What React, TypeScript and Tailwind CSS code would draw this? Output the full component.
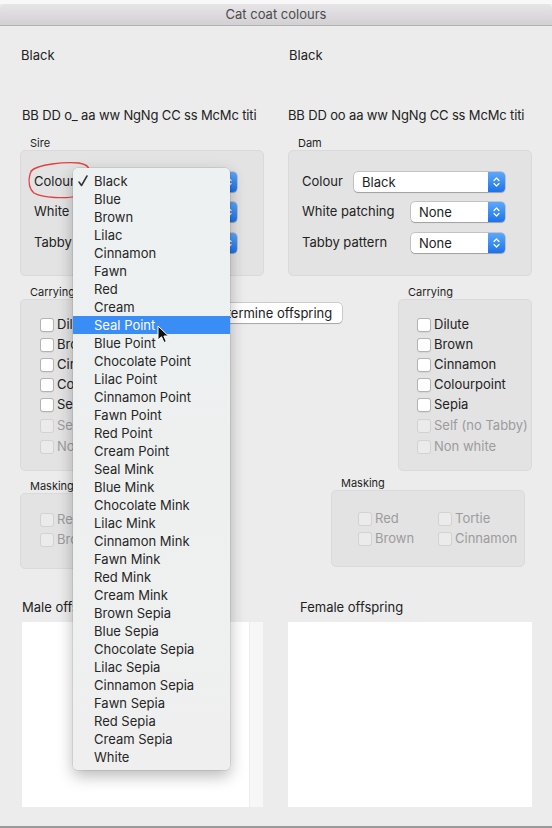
import React from 'react';

const COLOURS = [
  'Black', 'Blue', 'Brown', 'Lilac', 'Cinnamon', 'Fawn', 'Red', 'Cream',
  'Seal Point', 'Blue Point', 'Chocolate Point', 'Lilac Point', 'Cinnamon Point', 'Fawn Point', 'Red Point', 'Cream Point',
  'Seal Mink', 'Blue Mink', 'Chocolate Mink', 'Lilac Mink', 'Cinnamon Mink', 'Fawn Mink', 'Red Mink', 'Cream Mink',
  'Brown Sepia', 'Blue Sepia', 'Chocolate Sepia', 'Lilac Sepia', 'Cinnamon Sepia', 'Fawn Sepia', 'Red Sepia', 'Cream Sepia',
  'White',
];

const Stepper = () => (
  <div className="w-[17px] h-full rounded-r-[4px] bg-linear-to-b from-[#5ba8fb] to-[#1b72ea] flex items-center justify-center">
    <svg width="7" height="12" viewBox="0 0 7 12" fill="none" stroke="white" strokeWidth="1.2" strokeLinecap="round" strokeLinejoin="round">
      <path d="M1 4.5 L3.5 2 L6 4.5" />
      <path d="M1 7.5 L3.5 10 L6 7.5" />
    </svg>
  </div>
);

const Popup = ({ value, className }: { value: string; className: string }) => (
  <div className={`h-[20px] flex bg-white rounded-[4px] shadow-[0_0_0_0.5px_rgba(0,0,0,0.28),0_1px_1px_rgba(0,0,0,0.18)] ${className}`}>
    <span className="flex-1 pl-[8px] text-[13px] leading-[20px] text-[#222]">{value}</span>
    <Stepper />
  </div>
);

const Check = ({ label, disabled }: { label: string; disabled?: boolean }) => (
  <div className="h-[20px] flex items-center gap-[3px] whitespace-nowrap">
    <span className={`shrink-0 w-[14px] h-[14px] rounded-[3px] ${disabled ? 'bg-[#ebebeb] shadow-[inset_0_0_0_1px_#d2d2d2]' : 'bg-white shadow-[inset_0_0_0_1px_#b3b3b3,0_0.5px_0.5px_rgba(0,0,0,0.1)]'}`} />
    <span className={`text-[13px] ${disabled ? 'text-[#9c9c9c]' : 'text-[#222]'}`}>{label}</span>
  </div>
);

const GroupLabel = ({ children }: { children: React.ReactNode }) => (
  <div className="h-[14px] pl-[10px] text-[11px] leading-[14px] text-[#1f1f1f]">{children}</div>
);

const PickerBox = ({ label, colourClass, patchClass }: { label: string; colourClass: string; patchClass: string }) => (
  <div>
    <div className="h-[14px] mt-[13px] pl-[10px] text-[11px] leading-[14px] text-[#1f1f1f]">{label}</div>
    <div className="h-[126px] rounded-[5px] bg-[#e3e3e3] border border-[#dadada] pt-[21px] pl-[13px] pr-[26px]">
      <div className="h-[20px] flex items-center">
        <span className="text-[13px]">Colour</span>
        <Popup value="Black" className={`ml-auto ${colourClass}`} />
      </div>
      <div className="h-[20px] mt-[10px] flex items-center">
        <span className="text-[13px]">White patching</span>
        <Popup value="None" className={`ml-auto ${patchClass}`} />
      </div>
      <div className="h-[20px] mt-[11px] flex items-center">
        <span className="text-[13px]">Tabby pattern</span>
        <Popup value="None" className={`ml-auto ${patchClass}`} />
      </div>
    </div>
  </div>
);

const CarryingChecks = () => (
  <>
    <Check label="Dilute" />
    <Check label="Brown" />
    <Check label="Cinnamon" />
    <Check label="Colourpoint" />
    <Check label="Sepia" />
    <div className="mt-[1px]"><Check label="Self (no Tabby)" disabled /></div>
    <div className="mt-[1px]"><Check label="Non white" disabled /></div>
  </>
);

const MaskingChecks = () => (
  <>
    <Check label="Red" disabled />
    <Check label="Tortie" disabled />
    <Check label="Brown" disabled />
    <Check label="Cinnamon" disabled />
  </>
);

export default function App() {
  return (
    <div className="relative w-[552px] h-[828px] overflow-hidden bg-[#ececec] flex flex-col text-[#222] font-['Inter','Liberation_Sans',sans-serif]">
      <div className="h-[4px] bg-[#f8f8f8]" />
      <div className="h-[22px] rounded-t-[5px] bg-linear-to-b from-[#e7e5e7] to-[#d2d0d2] border-b border-[#b1b1b1] flex items-center justify-center text-[13px] text-[#4b4b4b]">
        Cat coat colours
      </div>

      <div className="flex-1 px-[20px]">
        {/* sire / dam summary */}
        <div className="grid grid-cols-[244px_244px] gap-x-[24px]">
          <div className="mt-[21px] pl-[1px] text-[13px] leading-[16px]">Black</div>
          <div className="mt-[21px] pl-[1px] text-[13px] leading-[16px]">Black</div>
          <div className="mt-[44px] pl-[2px] text-[13px] leading-[16px] tracking-[-0.15px] whitespace-nowrap">BB DD o_ aa ww NgNg CC ss McMc titi</div>
          <div className="mt-[44px] text-[13px] leading-[16px] tracking-[-0.15px] whitespace-nowrap">BB DD oo aa ww NgNg CC ss McMc titi</div>
          <PickerBox label="Sire" colourClass="w-[150px]" patchClass="w-[94px]" />
          <PickerBox label="Dam" colourClass="w-[151px]" patchClass="w-[94px]" />
        </div>

        {/* carrying */}
        <div className="mt-[9px] flex items-start">
          <div className="w-[133px]">
            <GroupLabel>Carrying</GroupLabel>
            <div className="h-[172px] rounded-[5px] bg-[#e3e3e3] border border-[#dadada] pt-[15px] pl-[19px] overflow-hidden">
              <CarryingChecks />
            </div>
          </div>
          <button className="ml-[47px] mt-[18px] w-[142px] h-[20px] rounded-[4px] bg-white text-[13px] leading-[20px] text-center shadow-[0_0_0_0.5px_rgba(0,0,0,0.28),0_1px_1px_rgba(0,0,0,0.18)]">
            Determine offspring
          </button>
          <div className="ml-[56px] w-[134px]">
            <GroupLabel>Carrying</GroupLabel>
            <div className="h-[172px] rounded-[5px] bg-[#e3e3e3] border border-[#dadada] pt-[15px] pl-[18px]">
              <CarryingChecks />
            </div>
          </div>
        </div>

        {/* masking */}
        <div className="flex items-start">
          <div className="mt-[8px] w-[193px]">
            <GroupLabel>Masking</GroupLabel>
            <div className="h-[76px] rounded-[5px] bg-[#e3e3e3] border border-[#dadada] pt-[16px] pl-[19px] grid grid-cols-[80px_80px] content-start">
              <MaskingChecks />
            </div>
          </div>
          <div className="mt-[5px] ml-[118px] w-[194px]">
            <GroupLabel>Masking</GroupLabel>
            <div className="h-[77px] rounded-[5px] bg-[#e3e3e3] border border-[#dadada] pt-[18px] pl-[26px] grid grid-cols-[80px_80px] content-start">
              <MaskingChecks />
            </div>
          </div>
        </div>

        {/* offspring */}
        <div className="mt-[30px] grid grid-cols-[244px_244px] gap-x-[24px]">
          <div className="pl-[2px]">
            <div className="h-[16px] text-[13px] leading-[16px]">Male offspring</div>
            <div className="mt-[7px] w-[241px] h-[185px] bg-white flex">
              <div className="flex-1" />
              <div className="w-[14px] bg-[#f7f7f7] border-l border-[#ededed]" />
            </div>
          </div>
          <div>
            <div className="h-[16px] pl-[12px] text-[13px] leading-[16px]">Female offspring</div>
            <div className="mt-[7px] h-[185px] bg-white" />
          </div>
        </div>
      </div>
      <div className="h-[2px] bg-[#9a9a9a]" />

      {/* hand-drawn annotation */}
      <svg className="absolute left-[26px] top-[160px]" width="68" height="42" viewBox="0 0 68 42" fill="none" stroke="#e5403f" strokeWidth="1.3" strokeLinecap="round">
        <path d="M5 11 C 12 4, 38 2, 53 3 C 59 4, 63 6, 63 10 C 62 19, 59 30, 51 36 C 41 39, 16 38, 8 33 C 3 29, 2 21, 4 14 C 5 10, 9 8, 13 7" />
      </svg>

      {/* open popup menu */}
      <div className="absolute left-[73px] top-[168px] w-[157px] h-[602px] pt-[4px] rounded-[5px] bg-linear-to-b from-[#edf1f1] to-[#efefef] shadow-[0_6px_16px_rgba(0,0,0,0.28),0_0_0_0.5px_rgba(0,0,0,0.14)]">
        {COLOURS.map((c, i) => (
          <div
            key={c}
            className={`relative h-[18px] pl-[21px] text-[13px] leading-[18px] whitespace-nowrap ${i === 8 ? 'bg-[#3b8df6] text-white' : 'text-[#262626]'}`}
          >
            {i === 0 && (
              <svg className="absolute left-[5px] top-[3px]" width="10" height="12" viewBox="0 0 10 12" fill="none" stroke="#333" strokeWidth="1.5" strokeLinecap="round" strokeLinejoin="round">
                <path d="M1 7 L3.5 10.5 L9 1" />
              </svg>
            )}
            {c}
          </div>
        ))}
      </div>

      {/* mouse pointer */}
      <svg className="absolute left-[157px] top-[325px]" width="13" height="19" viewBox="0 0 13 19">
        <path d="M1 1 L1 15 L4.5 11.8 L7 17.5 L9.3 16.5 L6.9 11 L11.5 11 Z" fill="#111" stroke="white" strokeWidth="1" strokeLinejoin="round" />
      </svg>
    </div>
  );
}
